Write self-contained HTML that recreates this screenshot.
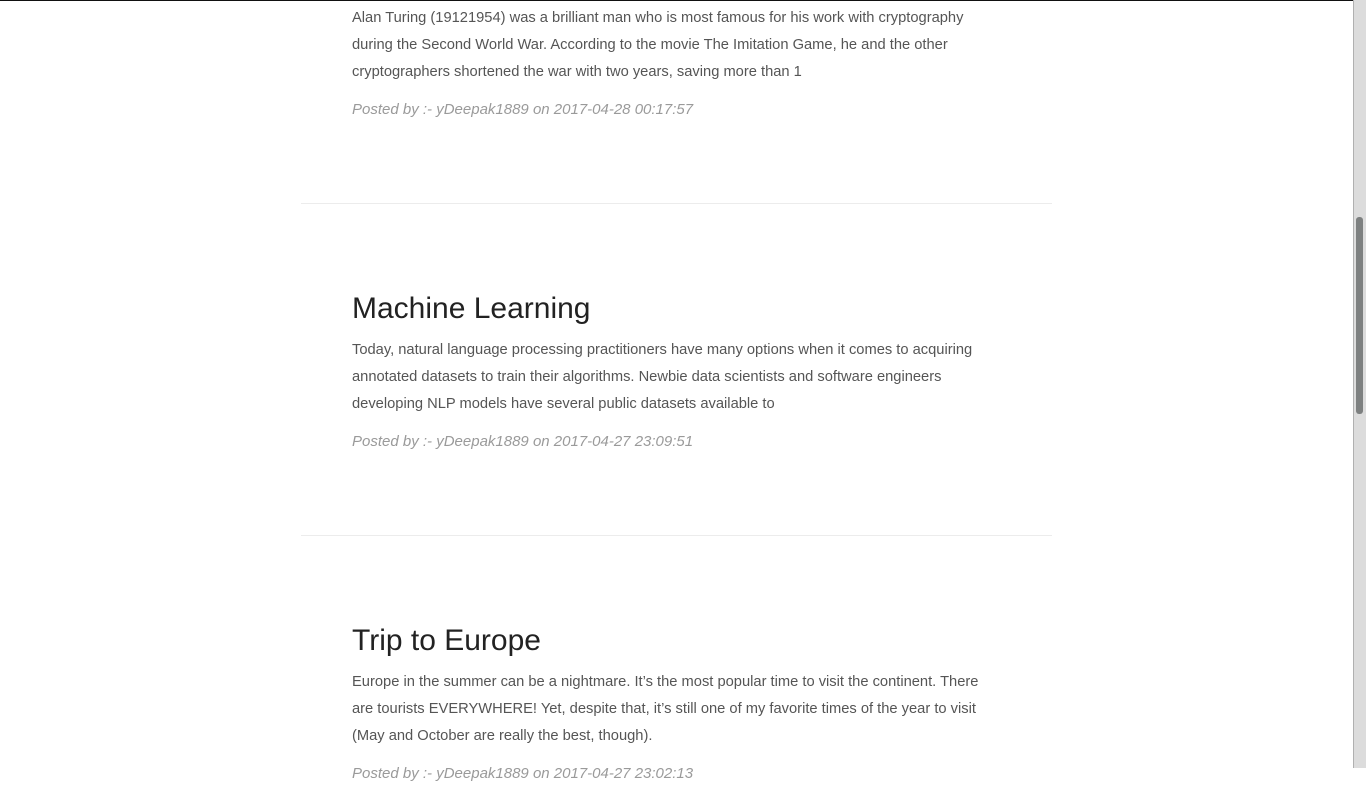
<!DOCTYPE html>
<html><head><meta charset="utf-8"><style>
html,body{margin:0;padding:0;background:#fff;width:1366px;height:768px;overflow:hidden;font-family:"Liberation Sans",sans-serif}
.topline{position:absolute;left:0;top:0;width:1353px;height:1px;background:#111}
.sb{position:absolute;left:1353px;top:0;width:13px;height:768px;background:#dcdcdc;border-left:1px solid #b0b0b0;box-sizing:border-box}
.thumb{position:absolute;left:1356px;top:217px;width:7px;height:197px;background:#7d8080;border-radius:3px}
.hr{position:absolute;left:301px;width:751px;height:1px;background:#ececec}
.p{position:absolute;left:352px;width:650px;font-size:14.7px;line-height:27px;color:#555;margin:0}
.m{position:absolute;left:352px;font-size:15px;line-height:27px;color:#9a9a9a;font-style:italic;margin:0}
.h{position:absolute;left:352px;font-size:30px;line-height:40px;color:#222;margin:0;font-weight:normal}
</style></head><body>
<div class="topline"></div>
<p class="p" style="top:5px">Alan Turing (19121954) was a brilliant man who is most famous for his work with cryptography during the Second World War. According to the movie The Imitation Game, he and the other cryptographers shortened the war with two years, saving more than 1</p>
<p class="m" style="top:96px">Posted by :- yDeepak1889 on 2017-04-28 00:17:57</p>
<div class="hr" style="top:203px"></div>
<h2 class="h" style="top:289px">Machine Learning</h2>
<p class="p" style="top:337px">Today, natural language processing practitioners have many options when it comes to acquiring annotated datasets to train their algorithms. Newbie data scientists and software engineers developing NLP models have several public datasets available to</p>
<p class="m" style="top:428px">Posted by :- yDeepak1889 on 2017-04-27 23:09:51</p>
<div class="hr" style="top:535px"></div>
<h2 class="h" style="top:621px">Trip to Europe</h2>
<p class="p" style="top:669px">Europe in the summer can be a nightmare. It’s the most popular time to visit the continent. There are tourists EVERYWHERE! Yet, despite that, it’s still one of my favorite times of the year to visit (May and October are really the best, though).</p>
<p class="m" style="top:760px">Posted by :- yDeepak1889 on 2017-04-27 23:02:13</p>
<div class="sb"></div><div class="thumb"></div>
</body></html>
